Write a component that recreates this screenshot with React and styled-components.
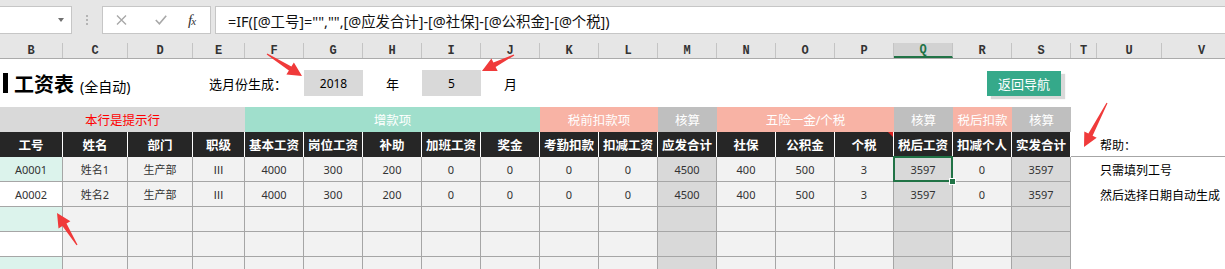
import React from 'react';
import styled, { createGlobalStyle, css } from 'styled-components';

const GlobalStyle = createGlobalStyle`
    body {
        margin: 0;
        background: #fff;
        font-family: "Noto Sans", "Noto Sans CJK SC", sans-serif;
        overflow: hidden;
    }
`;

// 列宽：B..V
const COLS = [63, 65, 65, 52, 59, 59, 59, 59, 59, 59, 59, 59, 59, 59, 59, 59, 59, 59, 26, 65, 80];
const LETTERS = 'BCDEFGHIJKLMNOPQRSTUV'.split('');
const GRID = COLS.map((w) => `${w}px`).join(' ');
const CJK = '"Noto Sans CJK SC", sans-serif';

const Page = styled.div`
    position: relative;
    width: 1225px;
    height: 269px;
    overflow: hidden;
`;

const FormulaBar = styled.div`
    display: flex;
    align-items: flex-start;
    height: 40px;
    padding-top: 6px;
    box-sizing: border-box;
    background: #e6e6e6;
`;

const Box = styled.div`
    display: flex;
    align-items: center;
    height: 28px;
    box-sizing: border-box;
    background: #fff;
    border: 1px solid #c6c6c6;
`;

const NameBox = styled(Box)`
    width: 73px;
    margin-left: -1px;
    justify-content: flex-end;
`;

const Caret = styled.span`
    margin-right: 7px;
    border-left: 3.5px solid transparent;
    border-right: 3.5px solid transparent;
    border-top: 4px solid #707070;
`;

const Dots = styled.div`
    width: 2px;
    height: 2px;
    margin: 9px 0 0 14px;
    background: #b4b4b4;
    box-shadow: 0 4px 0 #b4b4b4, 0 8px 0 #b4b4b4;
`;

const ButtonsBox = styled(Box)`
    width: 109px;
    margin-left: 14px;
    padding-left: 13px;
`;

const Fx = styled.span`
    margin-left: 21px;
    font-family: "Liberation Serif", serif;
    font-style: italic;
    font-size: 15px;
    color: #333;
    letter-spacing: -1px;

    small {
        font-size: 11px;
    }
`;

const FormulaBox = styled(Box)`
    flex: 1;
    margin-left: 4px;
    padding-left: 12px;
    border-right: none;
    font-size: 14.4px;
    color: #111;
    white-space: nowrap;
`;

const Row = styled.div`
    display: grid;
    grid-template-columns: ${GRID};
    height: ${(p) => p.$h}px;
    box-sizing: border-box;
`;

const LetterRow = styled(Row)`
    background: #e6e6e6;
    border-bottom: 1px solid #ababab;
`;

const Letter = styled.div`
    align-self: end;
    height: 15px;
    display: flex;
    align-items: center;
    justify-content: center;
    box-sizing: border-box;
    border-right: 1px solid #c4c4c4;
    font-family: "Liberation Mono", monospace;
    font-weight: bold;
    font-size: 12px;
    color: #333;

    ${(p) =>
        p.$active &&
        css`
            background: #d2d2d2;
            color: #217346;
            border-bottom: 2px solid #217346;
        `}
`;

const TitleRow = styled(Row)`
    align-items: center;

    & > * {
        grid-row: 1;
    }
`;

const Title = styled.div`
    grid-column: 1 / span 3;
    display: flex;
    align-items: baseline;
    padding-left: 3px;
    white-space: nowrap;

    &::before {
        content: '';
        align-self: center;
        width: 5px;
        height: 20px;
        background: #000;
    }

    strong {
        margin-left: 6px;
        font-size: 20px;
        font-weight: bold;
    }

    span {
        margin-left: 6px;
        font-size: 14px;
    }
`;

const Label = styled.div`
    grid-column: 4 / span 2;
    justify-self: end;
    padding-right: 17px;
    font-family: ${CJK};
    font-size: 13px;
    white-space: nowrap;
`;

const PickBox = styled.div`
    grid-column: ${(p) => p.$col};
    height: 26px;
    display: flex;
    align-items: center;
    justify-content: center;
    background: #d9d9d9;
    font-size: 12px;
`;

const Unit = styled.div`
    grid-column: ${(p) => p.$col};
    text-align: center;
    font-size: 13px;
`;

const NavButton = styled.div`
    grid-column: 17 / span 2;
    justify-self: end;
    margin-right: 10px;
    width: 74px;
    height: 25px;
    display: flex;
    align-items: center;
    justify-content: center;
    background: #35a98a;
    color: #fff;
    font-size: 13px;
    box-shadow: 4px 3px 1px #d9d9d9;
`;

const HintCell = styled.div`
    grid-column: span ${(p) => p.$span};
    display: flex;
    align-items: center;
    justify-content: center;
    background: ${(p) => p.$bg};
    color: ${(p) => p.$color || '#fff'};
    font-size: 12.5px;
`;

const HeadCell = styled.div`
    position: relative;
    display: flex;
    align-items: center;
    justify-content: center;
    background: #262626;
    color: #fff;
    font-size: 12.5px;
    font-weight: bold;
    border-right: 1px solid #fff;

    ${(p) =>
        p.$comment &&
        css`
            &::after {
                content: '';
                position: absolute;
                top: 0;
                right: 0;
                border-top: 5px solid #e02020;
                border-left: 5px solid transparent;
            }
        `}
`;

const HelpCell = styled.div`
    grid-column: 19 / span 3;
    display: flex;
    align-items: center;
    padding-left: 29px;
    font-family: ${CJK};
    font-size: 12px;
    white-space: nowrap;
    ${(p) => p.$line && 'border-bottom: 1px solid #a6a6a6;'}
`;

const TONES = {
    teal: '#dcf3ec',
    white: '#fff',
    sum: '#d9d9d9',
    plain: '#f2f2f2',
};

const DataCell = styled.div`
    position: relative;
    display: flex;
    align-items: center;
    justify-content: center;
    background: ${(p) => TONES[p.$tone]};
    border-right: 1px solid #a6a6a6;
    border-bottom: 1px solid #a6a6a6;
    font-size: 11px;
    color: #333;
    ${(p) => p.$cjk && `font-family: ${CJK};`}

    ${(p) =>
        p.$selected &&
        css`
            z-index: 1;
            &::before {
                content: '';
                position: absolute;
                inset: -1px -1px -1px -1px;
                border: 2px solid #217346;
            }
            &::after {
                content: '';
                position: absolute;
                right: -4px;
                bottom: -4px;
                width: 5px;
                height: 5px;
                background: #217346;
                border: 1px solid #fff;
            }
        `}
`;

const Overlay = styled.svg`
    position: absolute;
    top: 0;
    left: 0;
    pointer-events: none;
    z-index: 5;
`;

const hints = [
    { span: 4, bg: '#d9d9d9', color: '#ff0000', text: '本行是提示行' },
    { span: 5, bg: '#a0dfcc', text: '增款项' },
    { span: 2, bg: '#f8b3a5', text: '税前扣款项' },
    { span: 1, bg: '#bfbfbf', text: '核算' },
    { span: 3, bg: '#f8b3a5', text: '五险一金/个税' },
    { span: 1, bg: '#bfbfbf', text: '核算' },
    { span: 1, bg: '#f8b3a5', text: '税后扣款' },
    { span: 1, bg: '#bfbfbf', text: '核算' },
];

const headers = [
    '工号', '姓名', '部门', '职级', '基本工资', '岗位工资', '补助', '加班工资', '奖金',
    '考勤扣款', '扣减工资', '应发合计', '社保', '公积金', '个税', '税后工资', '扣减个人', '实发合计',
];

const rows = [
    ['A0001', '姓名1', '生产部', 'Ⅲ', '4000', '300', '200', '0', '0', '0', '0', '4500', '400', '500', '3', '3597', '0', '3597'],
    ['A0002', '姓名2', '生产部', 'Ⅲ', '4000', '300', '200', '0', '0', '0', '0', '4500', '400', '500', '3', '3597', '0', '3597'],
    [],
    [],
    [],
];

const helpLines = ['只需填列工号', '然后选择日期自动生成'];
const SUM_COLS = [11, 15, 17];

const arrows = [
    [267, 54, 302, 76],
    [514, 55, 482, 71],
    [1107, 103, 1084, 147],
    [77, 245, 57, 213],
];

function arrowPoints([x1, y1, x2, y2]) {
    const len = Math.hypot(x2 - x1, y2 - y1);
    const dx = (x2 - x1) / len;
    const dy = (y2 - y1) / len;
    const nx = -dy;
    const ny = dx;
    const bx = x2 - dx * 14;
    const by = y2 - dy * 14;
    const p = (x, y, w) => `${(x + nx * w).toFixed(1)},${(y + ny * w).toFixed(1)}`;
    return [p(x1, y1, 0.6), p(bx, by, 2.4), p(bx, by, 7), `${x2},${y2}`, p(bx, by, -7), p(bx, by, -2.4), p(x1, y1, -0.6)].join(' ');
}

function toneFor(col, rowIdx) {
    if (col === 0) return rowIdx % 2 === 0 ? 'teal' : 'white';
    if (SUM_COLS.includes(col)) return 'sum';
    return 'plain';
}

function App() {
    return (
        <Page>
            <GlobalStyle />
            <FormulaBar>
                <NameBox>
                    <Caret />
                </NameBox>
                <Dots />
                <ButtonsBox>
                    <svg width="11" height="10" viewBox="0 0 11 10">
                        <path d="M1 0.5 L10 9.5 M10 0.5 L1 9.5" stroke="#a8a8a8" strokeWidth="1.4" fill="none" />
                    </svg>
                    <svg width="12" height="10" viewBox="0 0 12 10" style={{ marginLeft: 28 }}>
                        <path d="M0.8 5 L4.4 8.8 L11.2 0.8" stroke="#a8a8a8" strokeWidth="1.6" fill="none" />
                    </svg>
                    <Fx>
                        f<small>x</small>
                    </Fx>
                </ButtonsBox>
                <FormulaBox>=IF([@工号]="","",[@应发合计]-[@社保]-[@公积金]-[@个税])</FormulaBox>
            </FormulaBar>

            <LetterRow $h={19}>
                {LETTERS.map((l) => (
                    <Letter key={l} $active={l === 'Q'}>
                        {l}
                    </Letter>
                ))}
            </LetterRow>

            <TitleRow $h={48}>
                <Title>
                    <strong>工资表</strong>
                    <span>(全自动)</span>
                </Title>
                <Label>选月份生成：</Label>
                <PickBox $col={6}>2018</PickBox>
                <Unit $col={7}>年</Unit>
                <PickBox $col={8}>5</PickBox>
                <Unit $col={9}>月</Unit>
                <NavButton>返回导航</NavButton>
            </TitleRow>

            <Row $h={25}>
                {hints.map((h, i) => (
                    <HintCell key={i} $span={h.span} $bg={h.bg} $color={h.color}>
                        {h.text}
                    </HintCell>
                ))}
            </Row>

            <Row $h={25}>
                {headers.map((h, i) => (
                    <HeadCell key={h} $comment={i === 14}>
                        {h}
                    </HeadCell>
                ))}
                <HelpCell $line>帮助：</HelpCell>
            </Row>

            {rows.map((r, ri) => (
                <Row $h={25} key={ri}>
                    {headers.map((_, ci) => (
                        <DataCell
                            key={ci}
                            $tone={toneFor(ci, ri)}
                            $cjk={ci === 3}
                            $selected={ri === 0 && ci === 15}
                        >
                            {r[ci] || ''}
                        </DataCell>
                    ))}
                    <HelpCell>{helpLines[ri] || ''}</HelpCell>
                </Row>
            ))}

            <Overlay width="1225" height="269">
                {arrows.map((a, i) => (
                    <polygon key={i} points={arrowPoints(a)} fill="#f03a3a" />
                ))}
            </Overlay>
        </Page>
    );
}

export default App;
